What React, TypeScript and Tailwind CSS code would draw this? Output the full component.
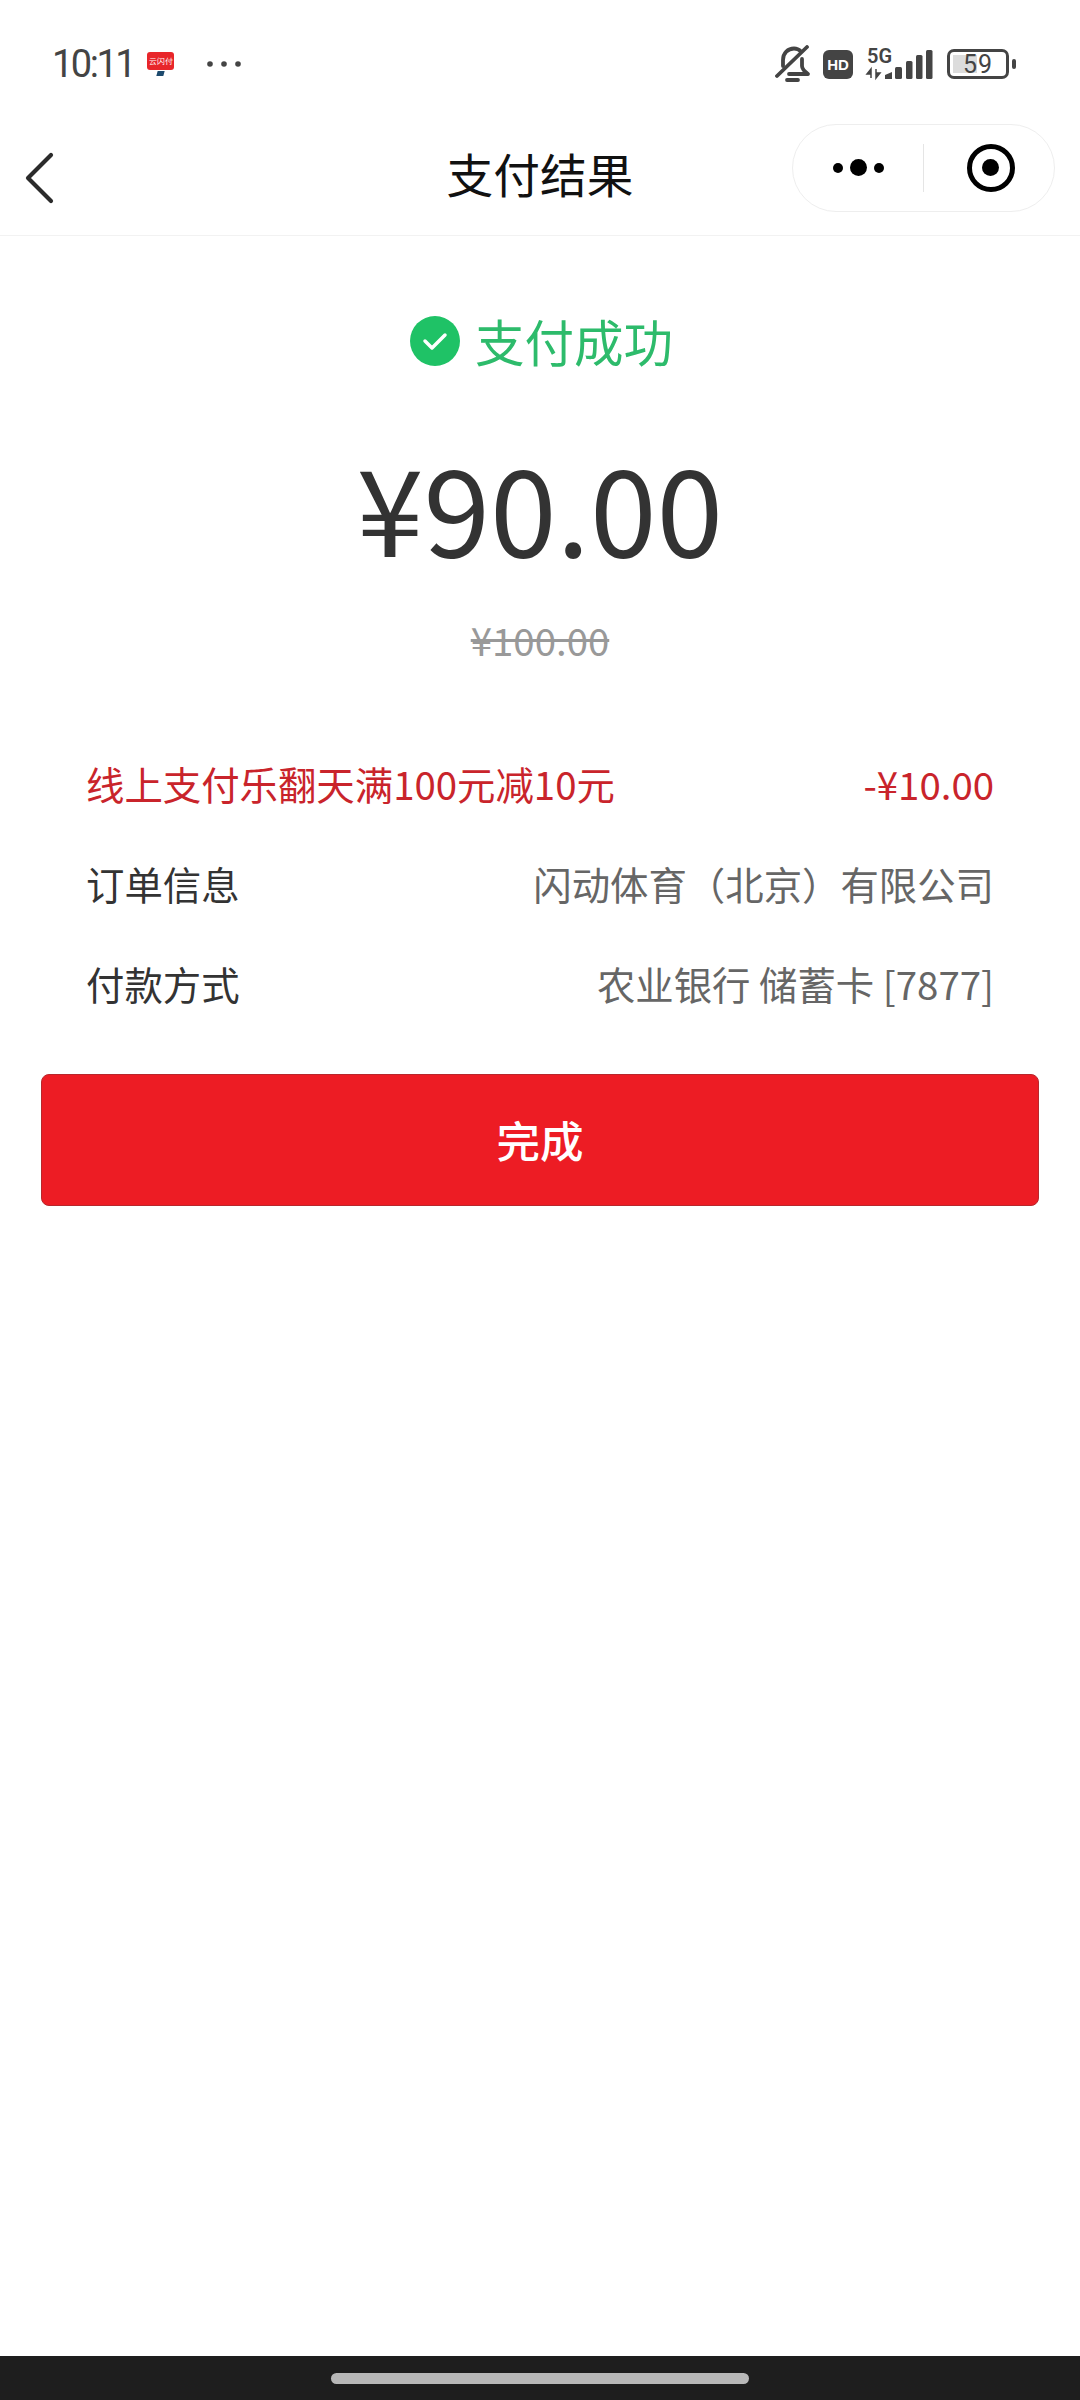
const cjk = "font-['Noto_Sans_CJK_SC',sans-serif]";

function StatusBar() {
  return (
    <div className="h-[118px] flex items-start justify-between pl-[52px] pr-[64px] pt-[45px] text-[#444]">
      <div className="flex items-center h-[38px]">
        <span className="font-['Roboto',sans-serif] text-[38px] leading-none tracking-[-2.5px]">10:11</span>
        <div className="ml-[13px] flex flex-col items-center">
          <div className="w-[27px] h-[18px] rounded-[3px] bg-[#e8262a] text-white text-[8px] leading-[18px] text-center">云闪付</div>
          <div className="w-[7px] h-[5px] mt-[1px] bg-[#1d4a6e] skew-x-[-15deg]" />
        </div>
        <svg width="36" height="8" viewBox="0 0 36 8" className="ml-[32px]">
          <circle cx="4" cy="4" r="2.8" fill="#444" />
          <circle cx="18" cy="4" r="2.8" fill="#444" />
          <circle cx="32" cy="4" r="2.8" fill="#444" />
        </svg>
      </div>
      <div className="flex items-center h-[38px]">
        <svg width="36" height="38" viewBox="0 0 36 38" fill="none" stroke="#444" strokeWidth="3.8" strokeLinecap="round" strokeLinejoin="round">
          <path d="M8 21V15C8 8 13 3.500 19 3.500c3 0 5 1 7 3" />
          <path d="M27 14v7c0 3 2 5 6 8H14" />
          <path d="M2 31L32 2" />
          <path d="M12 35h11" />
        </svg>
        <div className="ml-[12px] w-[30px] h-[29px] rounded-[6px] bg-[#444] text-white text-[15px] font-bold leading-[29px] text-center font-['Liberation_Sans',sans-serif]">HD</div>
        <svg width="67" height="32" viewBox="0 0 67 32" className="ml-[13px] overflow-visible">
          <text x="1" y="15" fontSize="20" fontWeight="600" fill="#444" fontFamily="Roboto, sans-serif">5G</text>
          <path d="M5 21v9M5 21l-4 5h4zM10 30v-9M10 30l4-5h-4z" fill="#444" stroke="#444" strokeWidth="1.500" />
          <path d="M19 27l7-3v7h-7z" fill="#444" />
          <rect x="29" y="19" width="7" height="12" rx="1.500" fill="#444" />
          <rect x="40" y="13" width="6.500" height="18" rx="1.500" fill="#444" />
          <rect x="50" y="7" width="6.500" height="24" rx="1.500" fill="#444" />
          <rect x="60" y="2" width="6.500" height="29" rx="1.500" fill="#444" />
        </svg>
        <div className="ml-[14px] relative w-[62px] h-[30px] rounded-[7px] border-[3px] border-[#444] flex items-center justify-center">
          <div className="absolute left-[3px] top-[3px] bottom-[3px] w-[24px] bg-[#dcdcdc]" />
          <span className="relative font-['Roboto',sans-serif] text-[25px] leading-none tracking-[1px]">59</span>
        </div>
        <div className="ml-[3px] w-[4px] h-[10px] rounded-[2px] bg-[#444]" />
      </div>
    </div>
  );
}

function NavBar() {
  return (
    <div className="h-[118px] grid grid-cols-[1fr_auto_1fr] items-center border-b border-[#f2f2f2] pr-[25px]">
      <svg width="30" height="52" viewBox="0 0 30 52" fill="none" stroke="#2b2b2b" strokeWidth="4.2" strokeLinecap="round" strokeLinejoin="round" className="ml-[24px] mt-[2px]">
        <path d="M27 3L4 26l23 23" />
      </svg>
      <h1 className={`${cjk} text-[46.7px] leading-none text-[#111] mb-[6px] ml-[25px]`}>支付结果</h1>
      <div className="justify-self-end mb-[18px] w-[263px] h-[88px] rounded-full border border-[#eeeeee] flex items-center bg-white">
        <div className="w-[130px] flex items-center justify-center gap-[7px]">
          <span className="w-[10px] h-[10px] rounded-full bg-black" />
          <span className="w-[17px] h-[17px] rounded-full bg-black" />
          <span className="w-[10px] h-[10px] rounded-full bg-black" />
        </div>
        <div className="w-px h-[48px] bg-[#e5e5e5]" />
        <div className="flex-1 flex items-center justify-center pl-[3px]">
          <div className="w-[48px] h-[48px] rounded-full border-[5px] border-black flex items-center justify-center">
            <span className="w-[17px] h-[17px] rounded-full bg-black" />
          </div>
        </div>
      </div>
    </div>
  );
}

function Row({ label, value, red }: { label: string; value: string; red?: boolean }) {
  return (
    <div className={`${cjk} h-[100px] flex items-center justify-between text-[38.4px] leading-none`}>
      <span className={red ? 'text-[#c9242b]' : 'text-[#333]'}>{label}</span>
      <span className={red ? 'text-[#c9242b]' : 'text-[#666]'}>{value}</span>
    </div>
  );
}

export default function App() {
  return (
    <div className="w-[1080px] h-[2400px] bg-white flex flex-col overflow-hidden">
      <StatusBar />
      <NavBar />
      <main className="flex-1 flex flex-col">
        <div className={`${cjk} mt-[70px] ml-[3px] flex items-center justify-center gap-[15px]`}>
          <div className="w-[50px] h-[50px] rounded-full bg-[#1fc266] flex items-center justify-center">
            <svg width="28" height="22" viewBox="0 0 28 22" fill="none" stroke="white" strokeWidth="3.500" strokeLinecap="round" strokeLinejoin="round">
              <path d="M4 11l7 7L24 5" />
            </svg>
          </div>
          <span className="text-[49.5px] leading-[70px] text-[#2dbb6b]">支付成功</span>
        </div>
        <div className={`${cjk} mt-[59px] text-center text-[120px] leading-[140px] text-[#333]`}>¥90.00</div>
        <div className={`${cjk} mt-[39px] text-center text-[38.4px] leading-[50px] text-[#999] line-through`}>¥100.00</div>
        <div className="mt-[69px] px-[86px]">
          <Row label="线上支付乐翻天满100元减10元" value="-¥10.00" red />
          <Row label="订单信息" value="闪动体育（北京）有限公司" />
          <Row label="付款方式" value="农业银行 储蓄卡 [7877]" />
        </div>
        <button className={`${cjk} mx-[41px] mt-[41px] h-[132px] rounded-[8px] bg-[#ed1c24] border border-[#b8272c] text-white text-[43.5px] font-medium`}>完成</button>
      </main>
      <div className="h-[44px] bg-[#1e1e1e] flex justify-center pt-[17px]">
        <div className="w-[418px] h-[11px] rounded-full bg-[#b8b8b8]" />
      </div>
    </div>
  );
}
